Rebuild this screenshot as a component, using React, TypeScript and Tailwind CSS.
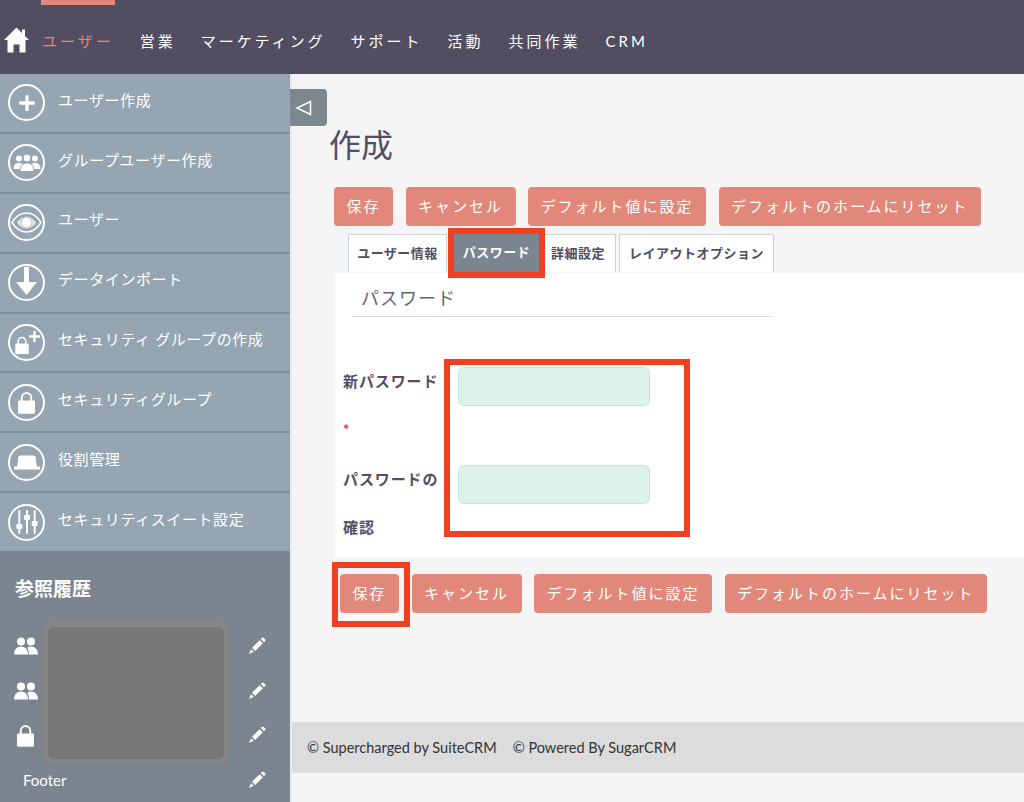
import type { ReactNode } from 'react'
import { FaPlus } from 'react-icons/fa'

const navItems = ['営業', 'マーケティング', 'サポート', '活動', '共同作業', 'CRM']

function HomeIcon() {
  return (
    <svg width="25" height="26" viewBox="0 0 25 26" fill="white" className="ml-1 mt-[-3px] shrink-0">
      <path d="M12.5 0.5L25 13h-3.5v12.5h-6v-8h-6v8h-6V13H0z" />
      <rect x="18" y="2.5" width="3" height="7" />
    </svg>
  )
}

function GroupIcon() {
  return (
    <svg width="28" height="19" viewBox="0 0 28 19" fill="white">
      <circle cx="6" cy="5.5" r="3" />
      <circle cx="22" cy="5.5" r="3" />
      <path d="M0.5 16c0-4 2-6 5.5-6s5.500 2 5.500 6z" />
      <path d="M16.500 16c0-4 2-6 5.500-6s5.500 2 5.500 6z" />
      <circle cx="14" cy="5" r="4" stroke="#95a5b1" strokeWidth="1" />
      <path d="M7 18.500c0-5.500 2.500-8.500 7-8.500s7 3 7 8.500z" stroke="#95a5b1" strokeWidth="1" />
    </svg>
  )
}

function EyeIcon() {
  return (
    <svg width="31" height="21" viewBox="0 0 31 21">
      <path d="M1 10.500C5 4 10 1 15.500 1S26 4 30 10.500C26 17 21 20 15.500 20S5 17 1 10.500z" fill="none" stroke="white" strokeWidth="1.500" />
      <path d="M6 10.500C9 6.500 12 4.500 15.500 4.500s6.500 2 9.500 6c-3 4-6 6-9.500 6s-6.500-2-9.500-6z" fill="#e8edf0" />
      <circle cx="15.500" cy="10.500" r="5.500" fill="white" stroke="#95a5b1" strokeWidth=".8" />
    </svg>
  )
}

function ArrowIcon() {
  return (
    <svg width="21" height="29" viewBox="0 0 21 29" fill="white" className="mt-[-3px]">
      <path d="M8 0h5v15h8L10.500 28 0 15h8z" />
    </svg>
  )
}

function Padlock({ w, h }: { w: number; h: number }) {
  return (
    <svg width={w} height={h} viewBox="0 0 18 24" fill="white">
      <path d="M4 11V7a5 5 0 0 1 10 0v4" fill="none" stroke="white" strokeWidth="2" />
      <rect x="0" y="10" width="18" height="14" rx="1.500" />
    </svg>
  )
}

function LockPlusIcon() {
  return (
    <div className="relative w-[26px] h-[24px] ml-[2px]">
      <div className="absolute left-0 bottom-0 flex">
        <Padlock w={14} h={18} />
      </div>
      <FaPlus className="absolute right-0 top-0 text-white" size={13} />
    </div>
  )
}

function HatIcon() {
  return (
    <svg width="26" height="15" viewBox="0 0 26 15" fill="white">
      <path d="M7 0.500h12c2 0 3 1.500 3 3.500 0 3 .5 5.500 1 7.500h3V14.500H0V11.500h3c.5-2 1-4.500 1-7.500 0-2 1-3.500 3-3.500z" />
    </svg>
  )
}

function SlidersIcon() {
  return (
    <svg width="24" height="26" viewBox="0 0 24 26" fill="white">
      <rect x="3.300" y="1" width="2" height="24" rx="1" />
      <rect x="1.300" y="15" width="6" height="5" rx="1" />
      <rect x="11" y="1" width="2" height="24" rx="1" />
      <rect x="9" y="6" width="6" height="5" rx="1" />
      <rect x="18.700" y="1" width="2" height="24" rx="1" />
      <rect x="16.700" y="12" width="6" height="5" rx="1" />
    </svg>
  )
}

function PeopleIcon() {
  return (
    <svg width="24" height="18" viewBox="0 0 24 18" fill="white">
      <circle cx="7" cy="4.500" r="4" />
      <circle cx="17" cy="4.500" r="4" />
      <path d="M0 17.500c0-5 3-8 7-8s7 3 7 8z" />
      <path d="M15 17.500h9c0-5-3-8-7-8-1.500 0-2.800.4-3.800 1.200 1.100 1.600 1.800 4 1.800 6.800z" />
    </svg>
  )
}

function PencilIcon() {
  return (
    <svg width="18" height="18" viewBox="0 0 20 20" fill="white" className="shrink-0">
      <path d="M4.500 12L13 3.500l3.500 3.500L8 15.500z" />
      <path d="M3.500 13.500L6.500 16.500L1 19z" />
      <path d="M14.200 2.300l1.300-1.300q1-1 2 0l1.500 1.500q1 1 0 2l-1.300 1.300z" />
    </svg>
  )
}

const sideItems: { label: string; icon: ReactNode }[] = [
  { label: 'ユーザー作成', icon: <FaPlus size={18} className="text-white" /> },
  { label: 'グループユーザー作成', icon: <GroupIcon /> },
  { label: 'ユーザー', icon: <EyeIcon /> },
  { label: 'データインポート', icon: <ArrowIcon /> },
  { label: 'セキュリティ グループの作成', icon: <LockPlusIcon /> },
  { label: 'セキュリティグループ', icon: <Padlock w={17} h={23} /> },
  { label: '役割管理', icon: <HatIcon /> },
  { label: 'セキュリティスイート設定', icon: <SlidersIcon /> },
]

const recents: ReactNode[] = [
  <PeopleIcon />,
  <PeopleIcon />,
  <div className="ml-[3px] flex"><Padlock w={17} h={23} /></div>,
  <span className="text-[15px] text-white whitespace-nowrap ml-[9px]">Footer</span>,
]

function ActionButtons({ className }: { className: string }) {
  return (
    <div className={`flex gap-[12.5px] ${className}`}>
      {['保存', 'キャンセル', 'デフォルト値に設定', 'デフォルトのホームにリセット'].map((t) => (
        <button
          key={t}
          className="h-[39px] px-[12.5px] rounded bg-[#e2887a] text-white text-[15px] tracking-[2px] whitespace-nowrap"
        >
          {t}
        </button>
      ))}
    </div>
  )
}

export default function App() {
  return (
    <div className="h-[802px] w-[1024px] overflow-hidden flex flex-col font-['Lato','Noto_Sans_CJK_JP',sans-serif]">
      <header className="h-[74px] shrink-0 bg-[#524e62] flex items-center relative pt-[8px]">
        <HomeIcon />
        <div className="absolute left-[41px] top-0 w-[74px] h-[5px] bg-[#e2887a]" />
        <span className="ml-[13px] text-[#e2887a] text-[15px] tracking-[3px]">ユーザー</span>
        {navItems.map((n, i) => (
          <span key={n} className={`${i === 0 ? 'ml-[26px]' : 'ml-[25px]'} text-white text-[15px] tracking-[3px]`}>
            {n}
          </span>
        ))}
      </header>

      <div className="flex flex-1 min-h-0">
        <aside className="w-[290px] shrink-0 flex flex-col">
          <div className="bg-[#95a5b1] h-[477px] shrink-0 flex flex-col">
            {sideItems.map((s, i) => (
              <div
                key={s.label}
                className={`flex-1 flex items-center pl-2 ${i < 7 ? 'border-b-2 border-[#7f8e9b]' : ''}`}
              >
                <div className="w-[37px] h-[37px] rounded-full border-2 border-white flex items-center justify-center shrink-0 overflow-hidden">
                  {s.icon}
                </div>
                <span className="ml-[13px] text-white text-[15px] tracking-[.6px] mt-[-6px] whitespace-nowrap">
                  {s.label}
                </span>
              </div>
            ))}
          </div>

          <div className="flex-1 min-h-0 bg-[#7a858f] relative">
            <h2 className="pl-[15px] pt-[25px] text-white text-[19px] font-bold leading-[26px]">参照履歴</h2>
            <div className="mt-[22px] flex flex-col">
              {recents.map((r, i) => (
                <div key={i} className="h-[44.5px] flex items-center justify-between pl-[14px] pr-[24px]">
                  {r}
                  <PencilIcon />
                </div>
              ))}
            </div>
            <div className="absolute left-[42px] top-[70px] w-[188px] h-[144px] rounded-[12px] border-[6px] border-[#868686] bg-[#777777]" />
          </div>
        </aside>

        <main className="flex-1 bg-[#f5f5f5] border-l-2 border-[#e8e8f0] relative pl-[38px] flex flex-col">
          <button className="absolute left-[-2px] top-[15px] w-[37px] h-[37px] bg-[#7c8790] rounded-r flex items-center pl-[5px]">
            <svg width="17" height="16" viewBox="0 0 17 16" fill="none" stroke="white" strokeWidth="1.600">
              <path d="M15.500 1.500v13L2 8z" />
            </svg>
          </button>

          <h1 className="pt-[55px] -ml-px text-[32px] leading-[32px] text-[#534d64]">作成</h1>
          <ActionButtons className="ml-[4px] mt-[26px]" />

          <div className="ml-[18px] mt-[8px] flex items-stretch h-[38px] text-[13px] font-bold tracking-[.5px] text-[#534d64]">
            <div className="w-[99px] bg-white border border-b-0 border-[#cdd3dd] flex items-center justify-center whitespace-nowrap">
              ユーザー情報
            </div>
            <div className="relative w-[87px] bg-[#7a858f] ml-[6px] text-white flex items-center justify-center whitespace-nowrap z-10">
              パスワード
              <div className="absolute left-[-5px] top-[-6px] w-[97px] h-[50px] border-[6px] border-[#ef4023]" />
            </div>
            <div className="w-[76px] bg-white border border-b-0 border-[#cdd3dd] flex items-center justify-center whitespace-nowrap">
              詳細設定
            </div>
            <div className="w-[155px] ml-[3px] bg-white border border-b-0 border-[#cdd3dd] flex items-center justify-center whitespace-nowrap">
              レイアウトオプション
            </div>
          </div>

          <section className="ml-[5px] mt-px h-[284px] shrink-0 bg-white relative">
            <div className="ml-[17px] w-[419px] h-[44px] pl-[9px] pt-[7px] border-b border-[#d8dbe2] flex items-center">
              <span className="text-[18px] tracking-[1px] text-[#666474]">パスワード</span>
            </div>
            <div className="mt-[40px] ml-[8px] grid grid-cols-[115px_192px] auto-rows-[98px] text-[15px] font-bold tracking-[.9px] text-[#534d64]">
              <div className="leading-[48px]">
                新パスワード
                <br />
                <span className="text-[#ef2b2b]">*</span>
              </div>
              <input type="text" className="mt-[10px] h-[39px] rounded-md bg-[#dcf3ec] border border-[#bfe8da]" />
              <div className="leading-[48px]">
                パスワードの
                <br />
                確認
              </div>
              <input type="text" className="mt-[10px] h-[39px] rounded-md bg-[#dcf3ec] border border-[#bfe8da]" />
            </div>
            <div className="absolute left-[109px] top-[86px] w-[246px] h-[178px] border-[6px] border-[#ef4023]" />
          </section>

          <div className="relative">
            <ActionButtons className="ml-[10px] mt-[17px]" />
            <div className="absolute left-[2px] top-[5px] w-[78px] h-[65px] border-[6px] border-[#ef4023]" />
          </div>

          <footer className="mt-[109px] -ml-[38px] h-[51px] bg-[#dcdcdc] flex items-center pl-[15px] gap-[16px] text-[14.5px] text-[#333333] whitespace-nowrap">
            <span>© Supercharged by SuiteCRM</span>
            <span>© Powered By SugarCRM</span>
          </footer>
        </main>
      </div>
    </div>
  )
}
